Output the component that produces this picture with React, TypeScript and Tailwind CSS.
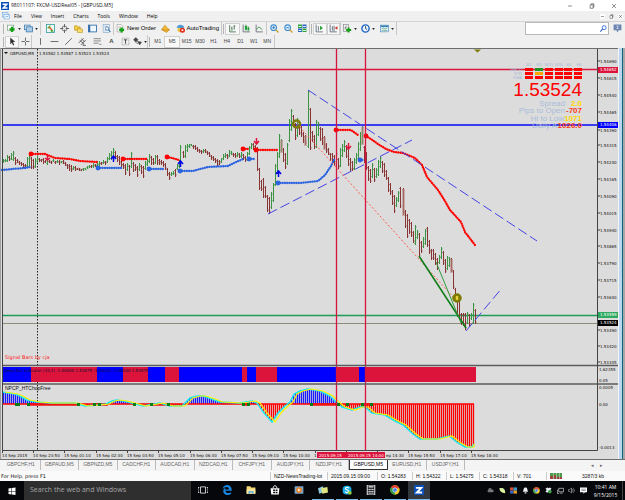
import type { ReactNode } from 'react';
import clsx from 'clsx';

type Point = [number, number];

/* ---------- icons ---------- */

const icons: Record<string, ReactNode> = {
  newChart: (
    <>
      <rect x="1" y="2" width="11" height="9" fill="#fff" stroke="#5a8a6a" />
      <path d="M9 5v9M4.500 9.500h9" stroke="#12a012" strokeWidth="4" />
    </>
  ),
  profiles: (
    <>
      <rect x="1" y="2" width="10" height="8" fill="#dcecf8" stroke="#4a7fae" strokeWidth="1.500" />
      <rect x="4" y="5" width="11" height="9" fill="#a9cdea" stroke="#4a7fae" strokeWidth="1.500" />
    </>
  ),
  market: (
    <>
      <rect x="1" y="1" width="14" height="14" fill="#eafaf0" stroke="#3aa0a0" strokeWidth="1.500" />
      <path d="M3 7l4-4v4z" fill="#19a319" stroke="#19a319" />
      <path d="M9 13V9l4 4z" fill="#19a319" stroke="#19a319" />
      <path d="M5 5l6 6" stroke="#e0602a" strokeWidth="2.500" />
    </>
  ),
  target: (
    <>
      <circle cx="8" cy="8" r="4.500" fill="none" stroke="#666" strokeWidth="1.500" />
      <path d="M8 0v6M8 10v6M0 8h6M10 8h6" stroke="#555" strokeWidth="1.500" />
    </>
  ),
  navigator: (
    <>
      <path d="M1 3h4l1 2h5v6H1z" fill="#f6d24a" stroke="#b8860b" />
      <path d="M6 8l3-1 1 2h5v6H6z" fill="#f9df70" stroke="#b8860b" />
    </>
  ),
  terminal: (
    <>
      <rect x="1" y="2" width="14" height="12" fill="#eef6fd" stroke="#2d6ba8" strokeWidth="1.500" />
      <path d="M1 2h3v12H1z" fill="#2d6ba8" />
    </>
  ),
  tester: (
    <>
      <rect x="2" y="1" width="11" height="14" fill="#eef4fa" stroke="#7b9dbd" />
      <path d="M4 4h6M4 12h4" stroke="#7b9dbd" />
      <circle cx="9" cy="8" r="3" fill="#fff" stroke="#3c78b4" strokeWidth="1.500" />
      <path d="M11 10l4 4" stroke="#3c78b4" strokeWidth="2" />
    </>
  ),
  order: (
    <>
      <path d="M2 1h7l3 3v10H2z" fill="#fff" stroke="#888" />
      <path d="M4 5h5M4 7h5" stroke="#999" />
      <path d="M10 6v9M5.500 10.500h9" stroke="#15a015" strokeWidth="4" />
    </>
  ),
  editor: (
    <>
      <path d="M1 10l6-8 4 5 4 3-5 5z" fill="#f4b832" stroke="#b97a10" />
      <path d="M1 10l7 1 7-1" stroke="#b97a10" fill="none" />
    </>
  ),
  auto: (
    <>
      <path d="M1 6c2-6 12-6 14 0l-7 2z" fill="#4c9bd6" />
      <path d="M3 7h10v6c-3 2-7 2-10 0z" fill="#f0c040" />
      <circle cx="11.500" cy="11" r="4.500" fill="#e02a1a" />
      <rect x="10" y="9.500" width="3" height="3" fill="#fff" />
    </>
  ),
  bars: <path d="M3 2v12h11M7 5v7M5.500 7H7M11 2v8M11 4h2" fill="none" stroke="#3d6d48" strokeWidth="1.500" />,
  candles: (
    <>
      <path d="M2 1v13h12" fill="none" stroke="#667" strokeWidth="1.500" />
      <path d="M7 1v11M11 4v9" stroke="#1c8a30" />
      <path d="M5 3h4v7H5zM10 6h3v5h-3z" fill="#21a03a" />
    </>
  ),
  line: (
    <>
      <path d="M2 1v13h12" fill="none" stroke="#667" strokeWidth="1.500" />
      <path d="M3 10c3-8 6-3 10 0" fill="none" stroke="#1c8a30" strokeWidth="1.500" />
    </>
  ),
  zoomIn: (
    <>
      <circle cx="6.500" cy="6.500" r="5" fill="#dff0ff" stroke="#3f8fd0" strokeWidth="2" />
      <path d="M4 6.500h5M6.500 4v5" stroke="#2a70b0" strokeWidth="1.500" />
      <path d="M10 10l5 5" stroke="#c9a227" strokeWidth="2.500" />
    </>
  ),
  zoomOut: (
    <>
      <circle cx="6.500" cy="6.500" r="5" fill="#dff0ff" stroke="#3f8fd0" strokeWidth="2" />
      <path d="M4 6.500h5" stroke="#2a70b0" strokeWidth="1.500" />
      <path d="M10 10l5 5" stroke="#c9a227" strokeWidth="2.500" />
    </>
  ),
  tile: (
    <>
      <path d="M0 1h7v6H0zM8 8h7v6H8z" fill="#2aa335" />
      <path d="M8 1h7v6H8zM0 8h7v6H0z" fill="#2a60c0" />
      <path d="M1 4.500h5M9 4.500h5M1 11.500h5M9 11.500h5" stroke="#e8f4ff" strokeWidth="2" />
    </>
  ),
  scroll: (
    <>
      <path d="M2 1v13h12M6 4v8" fill="none" stroke="#567" strokeWidth="1.500" />
      <path d="M9 3l5 4-5 4z" fill="#1fa030" />
    </>
  ),
  shift: (
    <>
      <path d="M2 1v13h12M6 4v8M9 3v10" fill="none" stroke="#567" strokeWidth="1.500" />
      <path d="M15 4l-5 3 5 3z" fill="#d03020" />
    </>
  ),
  indicators: (
    <>
      <rect x="1" y="1" width="9" height="12" fill="#f4f4f4" stroke="#777" />
      <path d="M4 10c0-6 1-7 3-6M3 7h4" fill="none" stroke="#555" />
      <path d="M10 6v9M5.500 10.500h9" stroke="#15a015" strokeWidth="3.500" />
    </>
  ),
  clock: (
    <>
      <circle cx="8" cy="8" r="6.500" fill="#eaf4ff" stroke="#1f66c0" strokeWidth="2.500" />
      <path d="M8 4v4l3 2" fill="none" stroke="#234" strokeWidth="1.500" />
    </>
  ),
  template: (
    <>
      <rect x="1" y="2" width="14" height="12" fill="#e8f4fb" stroke="#3c82b8" />
      <path d="M1 4h14" stroke="#3c82b8" strokeWidth="3" />
      <path d="M3 9l3-2 3 2 4-2M3 12l3-1 3 1 4-1" fill="none" stroke="#2a8a4a" />
    </>
  ),
  cursor: <path d="M4 1v12l3-3 2 5 2-1-2-5h4z" fill="#333" />,
  cross: <path d="M8 1v6M8 9v6M1 8h6M9 8h6" stroke="#555" strokeWidth="1.500" />,
  vline: <path d="M8 2v12" stroke="#555" strokeWidth="1.500" />,
  hline: <path d="M1 8h14" stroke="#555" strokeWidth="1.500" />,
  trend: <path d="M2 14L14 2" stroke="#555" strokeWidth="1.500" />,
  channel: (
    <path d="M1 11l9-9M5 14l9-9M3 6l8 6M6 3l6 6M9 15h5M9 12v3" stroke="#555" strokeWidth="1.500" />
  ),
  fibo: <path d="M1 3h13M1 7h13M1 11h9M11 13h4" stroke="#777" strokeWidth="1.500" />,
  letterBox: (
    <>
      <rect x="2" y="2" width="12" height="12" fill="none" stroke="#777" strokeDasharray="2 1" />
      <path d="M5 5h6M8 5v7" stroke="#333" strokeWidth="1.500" />
    </>
  ),
  shapes: <path d="M1 5l4-4 4 4-4 4zM8 8l4 6 3-5zM4 9l5 3" fill="#444" stroke="#444" />,
  windows: <path d="M1 3l6-1v6H1zM8 2l7-1v7H8zM1 9h6v6l-6-1zM8 9h7v7l-7-1z" fill="#fff" />,
  taskView: (
    <path d="M4 3h8v10H4zM2 4H0v8h2M14 4h2v8h-2" fill="none" stroke="#fff" strokeWidth="1.200" />
  ),
  edge: (
    <path
      d="M1 7C2 1 6 0 8 0c5 0 8 4 7.500 9H5.500c0 4 5 5 9 2.500v3C8 18 2 15 2 10c0-3 2-5 4-6-1 1-1 2-1 3h6c0-5-7-5-10 0z"
      fill="#1a86e0"
    />
  ),
  explorer: (
    <>
      <path d="M1 2h6l1 2h7v10H1z" fill="#f5d774" />
      <path d="M1 7h14v7H1z" fill="#fbe9a4" />
      <path d="M4 10h8v4h-2v-2H6v2H4z" fill="#45a6e0" />
    </>
  ),
  store: (
    <>
      <path d="M1 5h14l-1 10H2z" fill="#fff" />
      <path d="M5 5c0-5 6-5 6 0" fill="none" stroke="#fff" strokeWidth="1.500" />
      <path d="M5 7h3v3H5zM9 7h3v3H9zM5 11h3v2H5zM9 11h3v2H9z" fill="#111" />
    </>
  ),
  media: (
    <>
      <rect x="1" y="2" width="14" height="12" rx="1" fill="#7aa6cc" />
      <circle cx="8" cy="8" r="4.500" fill="#f08020" />
      <path d="M6.500 5.500l4 2.500-4 2.500z" fill="#fff" />
    </>
  ),
  notes: (
    <>
      <path d="M0 5l8-3 2 9-8 3z" fill="#8fc7d8" />
      <path d="M5 5l10-2 1 9-9 2z" fill="#dfe680" />
    </>
  ),
  skype: (
    <>
      <rect x="1" y="1" width="14" height="14" rx="6" fill="#19aee8" />
      <path d="M11 5C9 3 5 4 5.500 6c.5 2 5 1.500 5 4S6 13 5 10.500" fill="none" stroke="#fff" strokeWidth="1.800" />
      <circle cx="12.500" cy="12.500" r="3" fill="#8fd040" />
    </>
  ),
  calc: (
    <>
      <path d="M2 0h12v16H2z" fill="none" stroke="#fff" strokeWidth="1.500" />
      <path d="M4 3h8" stroke="#fff" strokeWidth="2" />
      <path d="M4 7h8M4 10h8M4 13h8" stroke="#fff" strokeWidth="2" strokeDasharray="2 1" />
    </>
  ),
  chrome: (
    <>
      <circle cx="8" cy="8" r="7.500" fill="#f7c81e" />
      <path d="M8 8L1.500 4A7.500 7.500 0 0114.500 4.500z" fill="#e23a2e" />
      <path d="M8 8L1.500 4A7.500 7.500 0 008 15.500z" fill="#2f9e4a" />
      <circle cx="8" cy="8" r="3.500" fill="#3f7fe8" stroke="#fff" />
    </>
  ),
  zed: (
    <>
      <rect width="16" height="16" fill="#0b4fb8" />
      <path d="M3 4.500h8.500L4.500 12H13" fill="none" stroke="#fff" strokeWidth="3" />
    </>
  ),
  cloud: <path d="M3 12a3 3 0 010-5 4 4 0 018-1 3 3 0 012 6z" fill="#777" />,
  leaf: <path d="M1 3c9-2 14 3 13 11C6 14 1 10 1 3z" fill="#d8f0a0" />,
  palette: (
    <>
      <path d="M0 1h8v7H0z" fill="#d84a2a" />
      <path d="M8 1h8v7H8z" fill="#3a9ad0" />
      <path d="M0 8h8v7H0z" fill="#3a60c0" />
      <path d="M8 8h8v7H8z" fill="#e0a030" />
    </>
  ),
  bell: <path d="M8 1c5 0 4 6 6 10H2C4 7 3 1 8 1zM6 12h4v3H6z" fill="#eee" />,
  dropbox: (
    <>
      <path d="M1 4l4-3 3 2 3-2 4 3-3 3 3 3-4 3-3-2-3 2-4-3 3-3z" fill="#e8eef4" />
      <circle cx="11" cy="11" r="4" fill="#3aa040" />
    </>
  ),
  network: <path d="M4 3h11v8H4zM7 14h6M1 6v9h4" fill="none" stroke="#ddd" strokeWidth="1.500" />,
  sound: (
    <path d="M1 6h3l4-4v12L4 10H1zM10 5q2 3 0 6M12.500 3q4 5 0 10" fill="none" stroke="#ccc" strokeWidth="1.200" />
  ),
  action: (
    <>
      <path d="M0 1h16v11h-5l-3 4v-4H0z" fill="#fff" />
      <path d="M3 5h10M3 8h10" stroke="#222" />
    </>
  ),
  search: (
    <>
      <circle cx="9.500" cy="6" r="4.500" fill="none" stroke="#2a62d0" strokeWidth="2" />
      <path d="M6 9l-5 6" stroke="#2a62d0" strokeWidth="2.500" />
    </>
  ),
  chat: (
    <>
      <path d="M1 1h14v10h-5l-2 4-2-4H1z" fill="#6d87b0" />
      <path d="M8 3v6M6 4h4M6 8h4" stroke="#dfe8f5" />
    </>
  ),
  minimize: <path d="M3 8h10" stroke="#333" strokeWidth="1.500" />,
  restore: <path d="M3 5h8v9H3zM6 5V2h7v9h-2" fill="none" stroke="#333" strokeWidth="1.500" />,
  close: <path d="M3 3l10 10M13 3L3 13" stroke="#333" strokeWidth="1.500" />,
  chartWindow: (
    <>
      <rect x="1" y="1" width="11" height="9" fill="#dcecfa" stroke="#5c9ad6" />
      <rect x="4" y="5" width="11" height="9" fill="#eef7ff" stroke="#5c9ad6" />
      <path d="M6 11l3-3 2 2 2-3" fill="none" stroke="#3d7fc4" />
    </>
  ),
};

const Icon = ({ name, className = 'size-[9px]' }: { name: string; className?: string }) => (
  <svg viewBox="0 0 16 16" className={clsx('shrink-0', className)} aria-hidden="true">
    {icons[name]}
  </svg>
);

const Caret = () => (
  <svg viewBox="0 0 4 3" className="h-[2px] w-[3px] shrink-0" aria-hidden="true">
    <path d="M0 0h4L2 3z" fill="#222" />
  </svg>
);

const Tool = ({ name, menu, active }: { name: string; menu?: boolean; active?: boolean }) => (
  <button
    aria-label={name}
    className={clsx(
      'flex h-3 flex-1 items-center justify-center',
      menu && 'gap-[2px]',
      active && 'border border-[#d0d0d0] bg-[#f8f8f8]',
    )}
  >
    <Icon name={name} />
    {menu && <Caret />}
  </button>
);

const Grip = () => <span className="mx-px h-[10px] w-px shrink-0 bg-[#b4b4b4]" />;

/* ---------- top bars ---------- */

const TitleBar = () => (
  <header className="flex h-[11px] items-center bg-white pl-px font-['Open_Sans',sans-serif]">
    <Icon name="zed" className="size-2" />
    <h1 className="ml-[2px] flex-1 text-[5px] leading-[11px] text-[#111]">98011107: FXCM-USDReal05 - [GBPUSD,M5]</h1>
    <div className="flex gap-4 pr-2">
      {['minimize', 'restore', 'close'].map((name) => (
        <button key={name} aria-label={name}>
          <Icon name={name} className="size-[6px]" />
        </button>
      ))}
    </div>
  </header>
);

const menus = ['File', 'View', 'Insert', 'Charts', 'Tools', 'Window', 'Help'];

const MenuBar = () => (
  <nav className="flex h-[10px] items-center bg-[#f0f0f0] pl-[2px] font-['Open_Sans',sans-serif]">
    <Icon name="chartWindow" className="size-2" />
    <div className="flex flex-1 gap-[9px] pl-1">
      {menus.map((menu) => (
        <button key={menu} className="text-[5px] leading-[10px] text-black">
          {menu}
        </button>
      ))}
    </div>
    <div className="flex gap-1 pr-[2px]">
      {['minimize', 'restore', 'close'].map((name) => (
        <button key={name} aria-label={`${name} chart`} className="bg-white">
          <Icon name={name} className="size-[5px]" />
        </button>
      ))}
    </div>
  </nav>
);

const group = 'flex h-[13px] shrink-0 items-center border-r border-[#c8c8c8]';

const StandardToolbar = () => (
  <div className="flex h-[14px] items-center border-t border-[#d4d4d4] bg-[#f0f0f0] pl-[2px]">
    <div className={clsx(group, 'w-[39px]')}>
      <Grip />
      <Tool name="newChart" menu />
      <Tool name="profiles" menu />
    </div>
    <div className={clsx(group, 'w-[73px] pl-[2px]')}>
      {['market', 'target', 'navigator', 'terminal', 'tester'].map((name) => (
        <Tool key={name} name={name} />
      ))}
    </div>
    <div className={clsx(group, 'w-[108px] gap-px pl-[2px] text-[6px]')}>
      <button className="flex items-center gap-[2px]">
        <Icon name="order" />
        New Order
      </button>
      <Tool name="editor" />
      <button className="flex items-center gap-[2px] pr-[2px]">
        <Icon name="auto" />
        AutoTrading
      </button>
    </div>
    <div className={clsx(group, 'w-[45px]')}>
      <Grip />
      <Tool name="bars" active />
      <Tool name="candles" />
      <Tool name="line" />
    </div>
    <div className={clsx(group, 'w-[43px]')}>
      <Tool name="zoomIn" />
      <Tool name="zoomOut" />
      <Tool name="tile" />
    </div>
    <div className={clsx(group, 'w-[31px]')}>
      <Grip />
      <Tool name="scroll" active />
      <Tool name="shift" active />
    </div>
    <div className={clsx(group, 'w-[56px]')}>
      <Tool name="indicators" menu />
      <Tool name="clock" menu />
      <Tool name="template" menu />
    </div>
    <div className="ml-auto flex h-[13px] w-[84px] items-center border border-[#b8b8b8] bg-white">
      <input aria-label="Search" className="min-w-0 flex-1 text-[6px] outline-none" />
      <button aria-label="Find" className="pr-px">
        <Icon name="search" className="size-[7px]" />
      </button>
    </div>
    <button aria-label="Community" className="flex w-4 justify-center">
      <Icon name="chat" />
    </button>
  </div>
);

const timeframes = ['M1', 'M5', 'M15', 'M30', 'H1', 'H4', 'D1', 'W1', 'MN'];

const DrawingToolbar = () => (
  <div className="flex h-[13px] items-center bg-[#f0f0f0] pl-[2px]">
    <div className={clsx(group, 'w-[30px]')}>
      <Grip />
      <Tool name="cursor" active />
      <Tool name="cross" />
    </div>
    <div className={clsx(group, 'w-[116px] pl-px')}>
      {['vline', 'hline', 'trend', 'channel', 'fibo'].map((name) => (
        <Tool key={name} name={name} />
      ))}
      <button className="flex-1 text-[6px] font-bold text-[#444]">A</button>
      <Tool name="letterBox" />
      <Tool name="shapes" menu />
    </div>
    <div className={clsx(group, 'w-[127px]')}>
      <Grip />
      {timeframes.map((frame) => (
        <button
          key={frame}
          className={clsx(
            'h-3 flex-1 text-[5px] text-[#444]',
            frame === 'M5' && 'border border-[#d0d0d0] bg-[#f8f8f8]',
          )}
        >
          {frame}
        </button>
      ))}
    </div>
  </div>
);

/* ---------- chart data ---------- */

// x, high, low
const priceBars: [number, number, number][] = [
  [3, 159, 163], [5, 159, 162], [7, 155, 162], [9, 156, 161], [11, 153, 160], [13, 151, 161], [15, 157, 165],
  [17, 159, 163], [19, 161, 165], [21, 162, 166], [23, 163, 168], [25, 164, 168], [27, 157, 167], [29, 155, 168],
  [31, 157, 169], [33, 159, 169], [35, 158, 168], [37, 156, 163], [39, 158, 162], [41, 159, 162], [43, 158, 164],
  [45, 160, 163], [47, 157, 165], [49, 160, 163], [51, 161, 164], [53, 159, 162], [55, 161, 164], [57, 160, 163],
  [59, 160, 165], [61, 161, 163], [63, 160, 164], [65, 162, 166], [67, 164, 169], [69, 164, 171], [71, 165, 172],
  [73, 166, 170], [75, 166, 171], [77, 168, 170], [79, 168, 171], [81, 169, 171], [83, 168, 171], [85, 168, 170],
  [87, 166, 169], [89, 165, 168], [91, 165, 168], [93, 163, 168], [95, 164, 167], [97, 162, 167], [99, 161, 166],
  [101, 162, 165], [103, 160, 164], [105, 161, 165], [107, 157, 163], [109, 153, 160], [111, 151, 160],
  [113, 148, 158], [115, 151, 159], [117, 155, 162], [119, 156, 165], [121, 160, 167], [123, 163, 169],
  [125, 164, 175], [127, 163, 171], [129, 165, 176], [131, 152, 168], [133, 162, 172], [135, 164, 171],
  [137, 166, 177], [139, 163, 171], [141, 165, 174], [143, 166, 178], [145, 161, 170], [147, 159, 166],
  [149, 154, 163], [151, 156, 165], [153, 158, 165], [155, 155, 164], [157, 155, 165], [159, 159, 165],
  [161, 160, 165], [163, 161, 167], [165, 163, 170], [167, 168, 176], [169, 172, 180], [171, 172, 176],
  [173, 171, 175], [175, 169, 177], [177, 164, 170], [179, 160, 168], [180, 145, 163], [183, 151, 158],
  [185, 145, 158], [187, 144, 152], [189, 144, 148], [191, 144, 146], [193, 145, 149], [195, 145, 150],
  [197, 147, 152], [199, 149, 153], [201, 150, 154], [203, 149, 153], [205, 149, 153], [207, 151, 155],
  [209, 152, 157], [211, 155, 160], [213, 156, 161], [215, 158, 163], [217, 159, 166], [219, 160, 165],
  [221, 158, 163], [223, 154, 160], [225, 153, 158], [227, 154, 159], [229, 150, 157], [231, 151, 155],
  [233, 153, 157], [235, 153, 158], [237, 152, 157], [239, 153, 158], [241, 152, 158], [243, 154, 160],
  [245, 156, 162], [247, 152, 161], [249, 146, 155], [251, 143, 149], [253, 143, 150], [255, 145, 151],
  [257, 147, 171], [259, 168, 190], [261, 180, 191], [263, 178, 198], [265, 186, 198], [267, 195, 212],
  [269, 197, 214], [271, 192, 209], [273, 183, 202], [275, 164, 186], [277, 152, 174], [279, 134, 158],
  [281, 139, 152], [283, 148, 162], [285, 153, 169], [287, 143, 165], [289, 119, 142], [291, 109, 131],
  [293, 115, 127], [295, 123, 140], [297, 118, 137], [299, 127, 135], [301, 126, 137], [303, 132, 143],
  [305, 135, 145], [308, 90, 148], [310, 108, 150], [312, 131, 142], [314, 135, 149], [316, 120, 148],
  [318, 122, 136], [320, 127, 141], [322, 128, 145], [324, 136, 149], [326, 143, 153], [328, 148, 155],
  [330, 153, 161], [332, 153, 163], [334, 155, 166], [336, 152, 163], [338, 158, 169], [340, 148, 167],
  [342, 144, 157], [344, 140, 152], [346, 145, 158], [348, 148, 166], [350, 158, 171], [352, 161, 171],
  [354, 158, 170], [356, 153, 164], [358, 142, 160], [360, 132, 151], [362, 126, 144], [364, 146, 163],
  [366, 152, 170], [368, 166, 181], [370, 169, 183], [372, 163, 178], [374, 168, 182], [376, 168, 178],
  [378, 160, 176], [380, 156, 168], [382, 161, 173], [384, 163, 177], [386, 170, 180], [388, 177, 192],
  [390, 183, 195], [392, 190, 205], [394, 195, 213], [396, 197, 207], [398, 191, 202], [400, 187, 208],
  [403, 188, 215], [405, 210, 228], [407, 214, 238], [409, 219, 234], [411, 222, 237], [413, 231, 243],
  [415, 225, 245], [417, 230, 239], [419, 233, 257], [421, 241, 253], [423, 237, 248], [425, 229, 245],
  [427, 227, 247], [429, 240, 254], [431, 249, 260], [433, 249, 260], [435, 253, 265], [437, 258, 270],
  [439, 255, 264], [441, 247, 259], [443, 251, 265], [445, 259, 273], [447, 256, 270], [449, 257, 267],
  [451, 258, 272], [453, 270, 289], [455, 288, 302], [457, 297, 317], [459, 300, 320], [461, 313, 325],
  [463, 313, 326], [465, 313, 330], [467, 312, 324], [469, 314, 327], [471, 313, 320], [473, 303, 324],
  [475, 309, 324],
];

const redTrends: Point[][] = [
  [[31, 154], [45, 154], [50, 156], [55, 158], [70, 159], [80, 161], [97, 162]],
  [[123, 159], [148, 159]],
  [[167, 157], [172, 158], [179, 160]],
  [[243, 149], [248, 149]],
  [[256, 150], [277, 150]],
  [[336, 130], [351, 130], [358, 135]],
  [[366, 136], [371, 139], [378, 144], [386, 149], [394, 152], [403, 153], [415, 158], [422, 165], [427, 177],
    [438, 190], [445, 201], [450, 210], [461, 222], [465, 232], [475, 245]],
];

const blueTrends: Point[][] = [
  [[98, 168], [122, 168]],
  [[149, 169], [165, 169]],
  [[180, 171], [193, 171], [200, 169], [208, 167], [228, 166], [234, 163], [243, 159]],
  [[249, 159], [255, 159]],
  [[278, 183], [300, 183], [318, 181], [325, 175], [331, 166], [334, 160]],
  [[360, 160], [364, 160]],
];

const signalBars = [2, 31, 97, 123, 148, 165, 179, 242, 247, 256, 277, 336, 359, 365, 476];

const oscillator: Point[] = [
  [2, 392], [15, 394], [20, 396], [27, 400], [37, 402], [50, 403], [75, 403], [85, 406], [97, 405], [106, 404],
  [112, 401], [117, 400], [124, 401], [132, 403], [143, 406], [160, 403], [170, 406], [182, 406], [190, 398],
  [197, 396], [203, 396], [212, 399], [220, 402], [240, 403], [252, 401], [257, 403], [264, 413], [272, 422],
  [278, 413], [285, 406], [290, 402], [294, 394], [300, 391], [308, 389], [320, 391], [330, 396], [336, 402],
  [342, 407], [352, 410], [360, 407], [365, 407], [372, 413], [385, 415], [395, 421], [403, 425], [413, 434],
  [420, 439], [437, 439], [449, 436], [458, 443], [465, 447], [472, 447], [474, 444],
];

const prices: [string, number][] = [
  ['1.54690', 61], ['1.54615', 78], ['1.54540', 95], ['1.54465', 112], ['1.54390', 130], ['1.54315', 145],
  ['1.54240', 162], ['1.54165', 179], ['1.54090', 196], ['1.54015', 213], ['1.53940', 230], ['1.53865', 246],
  ['1.53790', 263], ['1.53715', 280], ['1.53640', 297], ['1.53490', 330], ['1.53420', 346], ['1.53345', 362],
];

const priceTags = [
  { label: '1.54652', y: 70, fill: '#dc143c' },
  { label: '1.54406', y: 125, fill: '#0000ff' },
  { label: '1.53559', y: 315, fill: '#2eaa62' },
  { label: '1.53524', y: 323, fill: '#000' },
];

const times: [string, number][] = [
  ['14 Sep 2015', 2], ['14 Sep 23:50', 33], ['15 Sep 01:10', 64], ['15 Sep 02:30', 96], ['15 Sep 03:50', 127],
  ['15 Sep 05:10', 158], ['15 Sep 06:30', 190], ['15 Sep 07:50', 221], ['15 Sep 09:10', 252],
  ['15 Sep 10:30', 283], ['1', 314], ['ep 14:30', 386], ['15 Sep 15:50', 408],
  ['15 Sep 17:10', 440], ['15 Sep 18:30', 471],
];

const toPoints = (points: Point[]) => points.map((p) => p.join(',')).join(' ');

const valueAt = (points: Point[], x: number) => {
  const i = Math.max(1, points.findIndex((p) => p[0] >= x));
  const [x0, y0] = points[i - 1];
  const [x1, y1] = points[i];
  return y0 + ((y1 - y0) * (x - x0)) / (x1 - x0);
};

/* ---------- chart ---------- */

const Trend = ({ points, color, dot = true }: { points: Point[]; color: string; dot?: boolean }) => (
  <>
    <polyline
      points={toPoints(points)}
      fill="none"
      stroke={color}
      strokeWidth="2.300"
      strokeLinecap="round"
      strokeLinejoin="round"
      strokeDasharray="0.100 2.200"
    />
    {dot && <circle cx={points[0][0]} cy={points[0][1]} r="2.400" fill={color} />}
  </>
);

const PricePlot = () => (
  <>
    {priceBars.map(([x, high, low], i) => {
      const previous = priceBars[i - 1] ?? [0, 200, 200];
      const up = high + low < previous[1] + previous[2];
      return (
        <g key={x} stroke={up ? '#3a9444' : '#863434'}>
          <path d={`M${x + 0.5} ${high}V${low}`} />
          <path
            d={`M${x} ${up ? low - 1.5 : high + 1.5}h-1M${x + 1} ${up ? high + 2 : low - 2}h1`}
            opacity="0.500"
          />
        </g>
      );
    })}
    {[281, 304, 324, 362, 402, 450].map((x) => {
      const bar = priceBars.find((b) => b[0] >= x)!;
      return <rect key={x} x={bar[0] - 1} y={bar[1] + 1} width="3" height={bar[2] - bar[1]} fill="#b98a86" opacity="0.600" />;
    })}
    <Trend points={[[2, 170], [12, 169], [25, 168], [30, 167]]} color="#2b62e0" dot={false} />
    {blueTrends.map((points) => (
      <Trend key={points[0][0]} points={points} color="#2b62e0" />
    ))}
    {redTrends.map((points) => (
      <Trend key={points[0][0]} points={points} color="#ff0000" />
    ))}

    {/* trend lines */}
    <g stroke="#4444e6" strokeDasharray="10 4">
      <path d="M308 90L537 241" />
      <path d="M268 214L412 140" />
      <path d="M466 331L502 288" />
    </g>
    <path d="M297 124L454 298" stroke="#ff5a50" strokeDasharray="2 2" />
    <path d="M419 256L466 328" stroke="#0a7d14" strokeWidth="1.500" />
    <path d="M436 262L461 323" stroke="#2f9a3c" />

    {/* entry arrows */}
    <g fill="none" stroke="#e0143c" strokeWidth="1.500">
      <path d="M47.500 155v5M45 158l2.500 2 2.500-2" />
      <path d="M256.500 138v6M254 141l2.500 3 2.500-3" />
      <path d="M348.500 143v6M346 146l2.500 3 2.500-3" />
    </g>
    <g fill="none" stroke="#0000e6" strokeWidth="1.500">
      <path d="M113.500 162v-6M111 159l2.500-3 2.500 3" />
      <path d="M180.500 167v-6M178 164l2.500-3 2.500 3" />
      <path d="M278.500 177v-6M276 174l2.500-3 2.500 3" />
    </g>
    <g fill="none" stroke="#7d7a00" strokeWidth="2.500">
      <circle cx="296.500" cy="124" r="3.500" />
      <circle cx="457" cy="298" r="3.500" fill="#a08a10" />
    </g>
    <path d="M457 296v4" stroke="#ffe94a" strokeWidth="1.500" />
    <path d="M474 49.500h7l-3.500 3z" fill="#7d7a00" />
  </>
);

const Oscillator = () => (
  <>
    {Array.from({ length: 236 }, (_, i) => 3 + i * 2).map((x) => {
      const y = valueAt(oscillator, x);
      return <path key={x} d={`M${x + 0.5} 404V${y}`} stroke={y < 404 ? '#1a1aff' : '#ff0000'} strokeWidth="1.300" />;
    })}
    <path d="M2 404H474" stroke="#ff0000" strokeWidth="1.500" />
    {[[28, 79], [95, 108], [151, 168], [243, 248], [311, 336], [362, 372]].map(([from, to]) => (
      <path key={from} d={`M${from} 404.500H${to}`} stroke="#f01010" strokeWidth="2.500" />
    ))}
    <polyline points={toPoints(oscillator)} fill="none" stroke="#18e8f0" strokeWidth="1.500" />
    <polyline
      points={toPoints(oscillator.map(([x, y]) => [Math.min(x + 3, 474), y] as Point))}
      fill="none"
      stroke="#fff200"
      strokeWidth="1.200"
    />
    {[16, 18, 28, 78, 94, 99, 134, 151, 168, 243, 248, 311, 338, 347, 362, 371].map((x) => (
      <rect key={x} x={x - 1} y="403" width="3" height="3" fill="#0a7d14" />
    ))}
  </>
);

const statsRows = [
  { label: 'Spread', value: '2.0', x: 565, y: 106, color: '#ffd700' },
  { label: 'Pips to Open', value: '-707', x: 565, y: 113, color: '#ff3c14' },
  { label: 'Hi to Low', value: '1071', x: 564, y: 121, color: '#ffd700' },
  { label: 'Daily A', value: '1026.0', x: 557, y: 128, color: '#ff3c14' },
];

const StatsPanel = () => (
  <>
    <g fontSize="4" fill="#a4b8d4">
      {['M1', 'M5', 'M15', 'M30', 'H1', 'H4'].map((frame, i) => (
        <text key={frame} x={529 + i * 10} y="66" textAnchor="middle">
          {frame}
        </text>
      ))}
      {['MACD', 'STR', 'EMA'].map((label, row) => (
        <text key={label} x="522" y={71 + row * 4} textAnchor="end">
          {label}
        </text>
      ))}
    </g>
    {[0, 1, 2].map((row) =>
      [0, 1, 2, 3, 4, 5].map((col) => (
        <rect
          key={`${row}-${col}`}
          x={525 + col * 10 - (col > 3 ? 1 : 0)}
          y={68 + row * 4}
          width="8"
          height="3"
          fill={col === 1 && row === 0 ? '#229022' : col === 1 && row === 1 ? '#ffa500' : '#ff0000'}
        />
      )),
    )}
    <text x="582" y="96" fontSize="19" fill="#ff0000" textAnchor="end">
      1.53524
    </text>
    {statsRows.map((row) => (
      <g key={row.label} fontSize="8">
        <text x={row.x} y={row.y} fill="#a9bdd9" textAnchor="end">
          {row.label}
        </text>
        <text x="582" y={row.y} fill={row.color} fontWeight="bold" textAnchor="end">
          {row.value}
        </text>
      </g>
    ))}
  </>
);

const Chart = () => (
  <main>
    <svg viewBox="0 48 625 412" className="block h-auto w-full" fontFamily="Liberation Sans, Arial, sans-serif">
      <rect y="48" width="625" height="412" fill="#dcdcdc" />
      <path d="M0 48.500H618" stroke="#6e6e6e" />
      <path d="M0.500 48V460" stroke="#a0a0a0" />

      {/* levels */}
      <path d="M2 69.500H597" stroke="#dc143c" strokeWidth="1.300" />
      <path d="M2 125H597" stroke="#3c3cf0" strokeWidth="2" />
      <path d="M2 315.500H597" stroke="#1f9c58" strokeWidth="1.300" />
      <path d="M2 323.500H597" stroke="#8c8c78" />
      <path d="M37.500 49V450" stroke="#222" strokeDasharray="1.500 1.500" />

      <PricePlot />
      <StatsPanel />

      <g fontSize="4" fill="#111" fontFamily="DejaVu Sans, sans-serif">
        <path d="M4 52h4l-2 2z" />
        <text x="10" y="55">GBPUSD,M5</text>
        <text x="39" y="55">1.53582 1.53587 1.53523 1.53524</text>
      </g>
      <text x="5" y="359" fontSize="5" fill="#ff1a1a" fontFamily="DejaVu Sans, sans-serif">
        Signal Bars by cja
      </text>

      {/* signal bar */}
      {signalBars.slice(1).map((end, i) => (
        <rect
          key={end}
          x={signalBars[i]}
          y="367"
          width={end - signalBars[i]}
          height="15"
          fill={i % 2 ? '#dc143c' : '#0000ff'}
        />
      ))}
      <text x="4" y="372" fontSize="4" fill="#101030" fontFamily="DejaVu Sans, sans-serif">
        Deep Bar Indicator (33,1) -1.00000 1.53875 -1.00000 -1.00000 1.53875
      </text>

      <Oscillator />
      <text x="5" y="390" fontSize="5" fill="#111">NPCP_HTChopFree</text>

      <path d="M336.500 49V450M365.500 49V450" stroke="#d6143c" strokeWidth="1.300" />
      <path d="M2 365.500H618M2 384H618" stroke="#5c5c5c" strokeWidth="1.500" />
      <path d="M2 450.500H597.500V49M2.500 49V450" fill="none" stroke="#444" />

      {/* price scale */}
      <g fontSize="4" fill="#111" fontFamily="DejaVu Sans, sans-serif">
        {prices.map(([label, y]) => (
          <g key={label}>
            <path d={`M598 ${y}h2`} stroke="#444" />
            <text x="600" y={y + 2}>{label}</text>
          </g>
        ))}
        <text x="599" y="371">1.62355</text>
        <text x="599" y="382">0.05</text>
        <text x="599" y="389">0.0005</text>
        <text x="599" y="406">0.00</text>
        <text x="599" y="449">-0.0013</text>
        {priceTags.map(({ label, y, fill }) => (
          <g key={label}>
            <rect x="598" y={y - 3} width="20" height="6" fill={fill} />
            <text x="600" y={y + 1} fill="#fff">{label}</text>
          </g>
        ))}
      </g>

      {/* time scale */}
      <g fontSize="4" fill="#111" fontFamily="DejaVu Sans, sans-serif">
        {[2, 33, 64, 96, 127, 158, 190, 221, 252, 283, 315, 346, 377, 408, 440, 471].map((x) => (
          <path key={x} d={`M${x + 0.5} 450v3`} stroke="#444" />
        ))}
        {times.map(([label, x]) => (
          <text key={label} x={x} y="457">{label}</text>
        ))}
        <rect x="317" y="452" width="68" height="6" fill="#dc143c" />
        <g fill="#fff">
          <text x="319" y="457">2015.09.15</text>
          <text x="348" y="457">2015.09.15 14:00</text>
        </g>
      </g>

      {/* window edge */}
      <rect x="618" y="48" width="1" height="412" fill="#f4f4f4" />
      <rect x="619" y="48" width="3" height="412" fill="#b9d6ee" />
      <rect x="622" y="48" width="1" height="412" fill="#0d6478" />
      <rect x="623" y="48" width="2" height="412" fill="#a8a8a8" />
      <path d="M0 459.500H625" stroke="#6e6e6e" />
    </svg>
  </main>
);

/* ---------- bottom bars ---------- */

const chartTabs = [
  'GBPCHF,H1', 'GBPAUD,M5', 'GBPNZD,M5', 'CADCHF,H1', 'AUDCAD,H1', 'NZDCAD,H1',
  'CHFJPY,H1', 'AUDJPY,H1', 'NZDJPY,H1', 'GBPUSD,M5', 'EURUSD,H1', 'USDJPY,H1',
];

const ChartTabs = () => (
  <div className="flex h-[11px] items-start bg-[#f4f4f4] pl-[2px]">
    <div className="flex w-[463px]">
      {chartTabs.map((tab) => (
        <button
          key={tab}
          className={clsx(
            'h-[10px] flex-1 border-r text-center text-[5px] whitespace-nowrap',
            tab === 'GBPUSD,M5'
              ? 'border-b border-l border-[#333] bg-white text-black'
              : 'border-[#bbb] text-[#666]',
          )}
        >
          {tab}
        </button>
      ))}
    </div>
    <div className="ml-auto flex gap-[6px] pr-[22px] text-[5px] leading-[10px] text-[#666]">
      <button aria-label="Previous tab">◂</button>
      <button aria-label="Next tab">▸</button>
    </div>
  </div>
);

const statusCell = 'border-l border-[#ccc] pl-[3px]';

const StatusBar = () => (
  <footer className="flex h-[10px] items-center bg-[#fafafa] text-[5px] leading-[8px] whitespace-nowrap text-[#111]">
    <span className="w-[270px] pl-px font-['DejaVu_Sans',sans-serif]">For Help, press F1</span>
    <span className={clsx(statusCell, 'w-[57px] overflow-hidden')}>NZD-NewsTrading-lot</span>
    <span className={clsx(statusCell, 'w-[50px]')}>2015.09.15 09:00</span>
    <span className={clsx(statusCell, 'w-[35px]')}>O: 1.54283</span>
    <span className={clsx(statusCell, 'w-[34px]')}>H: 1.54322</span>
    <span className={clsx(statusCell, 'w-[33px]')}>L: 1.54275</span>
    <span className={clsx(statusCell, 'w-[34px]')}>C: 1.54318</span>
    <span className={clsx(statusCell, 'w-[33px]')}>V: 701</span>
    <span className={clsx(statusCell, 'flex flex-1 items-center gap-5')}>
      <svg viewBox="0 0 12 6" className="h-[6px] w-3" aria-hidden="true">
        <path d="M0 0h12v6H0z" fill="#4c9a4c" />
        <path d="M0 3h3v3H0zM4 2h2v4H4zM7 4h5v2H7z" fill="#a04040" />
        <path d="M3.500 0v6M6.500 0v6M9.500 0v6" stroke="#dfe8d8" strokeWidth="0.500" />
      </svg>
      3287/3 kb
    </span>
  </footer>
);

const apps = [
  { name: 'taskView' },
  { name: 'edge' },
  { name: 'explorer' },
  { name: 'store' },
  { name: 'media' },
  { name: 'notes', open: true },
  { name: 'skype', open: true },
  { name: 'calc', open: true },
  { name: 'chrome', open: true },
  { name: 'zed', open: true, active: true },
];

const tray = ['cloud', 'leaf', 'palette', 'bell', 'chrome', 'dropbox', 'network', 'sound', 'action'];

const Taskbar = () => (
  <div className="flex h-[19px] items-stretch bg-[#05070b] font-['Open_Sans',sans-serif]">
    <button aria-label="Start" className="flex w-6 items-center justify-center">
      <Icon name="windows" className="size-2" />
    </button>
    <input
      aria-label="Search the web and Windows"
      placeholder="Search the web and Windows"
      className="w-[167px] bg-[#2f2f2f] pl-[6px] text-[7px] text-white outline-none placeholder:text-[#a8a8a8]"
    />
    <div className="flex w-60">
      {apps.map((app) => (
        <button
          key={app.name}
          aria-label={app.name}
          className={clsx(
            'mx-px flex flex-1 items-center justify-center border-b',
            app.open ? 'border-[#76b9ed]' : 'border-transparent',
            app.active && 'bg-[#33383f]',
          )}
        >
          <Icon name={app.name} className="size-[10px]" />
        </button>
      ))}
    </div>
    <div className="ml-auto flex w-[104px] items-center justify-around">
      {tray.map((name) => (
        <button key={name} aria-label={`${name} tray`}>
          <Icon name={name} className="size-[7px]" />
        </button>
      ))}
    </div>
    <div className="mr-[2px] flex w-[34px] flex-col justify-center border-r border-[#444] text-center text-[5px] leading-[8px] text-white">
      <span>10:41 AM</span>
      <span>9/15/2015</span>
    </div>
  </div>
);

export default function App() {
  return (
    <div className="w-full bg-[#f0f0f0] font-['Liberation_Sans',Arial,sans-serif]">
      <TitleBar />
      <MenuBar />
      <StandardToolbar />
      <DrawingToolbar />
      <Chart />
      <ChartTabs />
      <StatusBar />
      <Taskbar />
    </div>
  );
}
